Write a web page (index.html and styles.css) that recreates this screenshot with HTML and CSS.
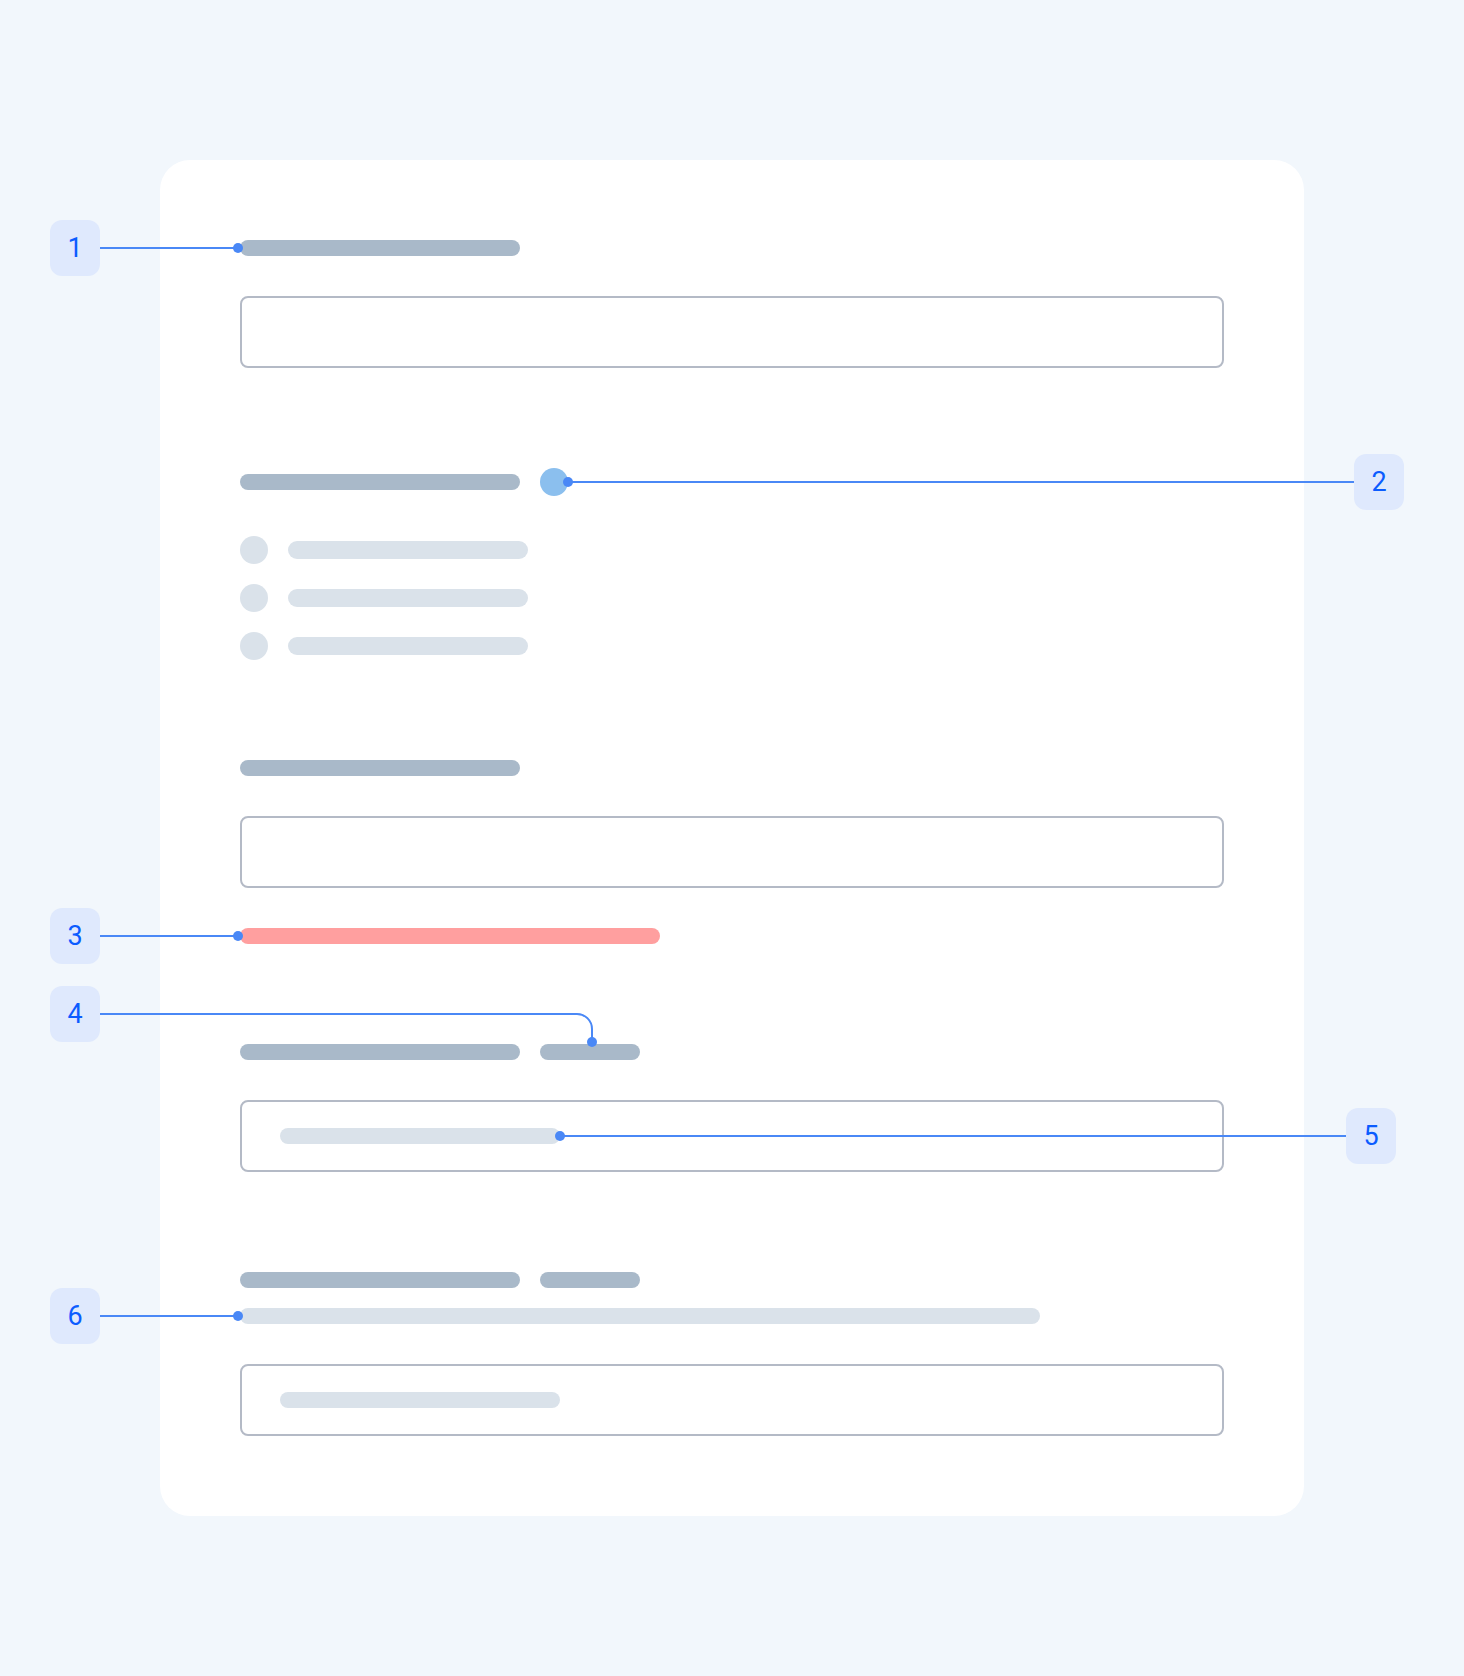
FILE: index.html
```html
<!DOCTYPE html>
<html lang="en">
<head>
  <meta charset="UTF-8">
  <meta name="viewport" content="width=device-width, initial-scale=1.0">
  <title>Form anatomy</title>
  <link rel="stylesheet" href="styles.css">
</head>
<body>

  <div class="page">
    <!-- Form skeleton -->
    <div class="card">

      <!-- Text field -->
      <div class="field">
        <div class="bar label"></div>
        <div class="input"></div>
      </div>

      <!-- Radio group with tooltip -->
      <div class="field">
        <div class="label-row">
          <div class="bar label"></div>
          <div class="tip"></div>
        </div>
        <div class="options">
          <div class="option"><span class="radio"></span><span class="bar option-text"></span></div>
          <div class="option"><span class="radio"></span><span class="bar option-text"></span></div>
          <div class="option"><span class="radio"></span><span class="bar option-text"></span></div>
        </div>
      </div>

      <!-- Field with error -->
      <div class="field">
        <div class="bar label"></div>
        <div class="input"></div>
        <div class="bar error"></div>
      </div>

      <!-- Optional field with placeholder -->
      <div class="field">
        <div class="label-row">
          <div class="bar label"></div>
          <div class="bar label-small"></div>
        </div>
        <div class="input"><span class="bar placeholder"></span></div>
      </div>

      <!-- Field with helper text -->
      <div class="field">
        <div class="label-row">
          <div class="bar label"></div>
          <div class="bar label-small"></div>
        </div>
        <div class="bar helper"></div>
        <div class="input"><span class="bar placeholder"></span></div>
      </div>

    </div>

    <!-- Callout lines -->
    <svg class="callouts" width="1464" height="1676" viewBox="0 0 1464 1676">
      <g fill="none" stroke="#4a88f6" stroke-width="2">
        <path d="M100 248 H238"/>
        <path d="M568 482 H1354"/>
        <path d="M100 936 H238"/>
        <path d="M100 1014 H577 A15 15 0 0 1 592 1029 V1042"/>
        <path d="M560 1136 H1346"/>
        <path d="M100 1316 H238"/>
      </g>
      <g fill="#4a88f6">
        <circle cx="238" cy="248" r="5"/>
        <circle cx="568" cy="482" r="5"/>
        <circle cx="238" cy="936" r="5"/>
        <circle cx="592" cy="1042" r="5"/>
        <circle cx="560" cy="1136" r="5"/>
        <circle cx="238" cy="1316" r="5"/>
      </g>
    </svg>

    <!-- Numbered markers -->
    <div class="marker" style="left: 50px; top: 220px;">1</div>
    <div class="marker" style="left: 1354px; top: 454px;">2</div>
    <div class="marker" style="left: 50px; top: 908px;">3</div>
    <div class="marker" style="left: 50px; top: 986px;">4</div>
    <div class="marker" style="left: 1346px; top: 1108px;">5</div>
    <div class="marker" style="left: 50px; top: 1288px;">6</div>
  </div>

</body>
</html>
```

FILE: styles.css
```css
* {
  margin: 0;
  padding: 0;
  box-sizing: border-box;
}

body {
  font-family: Roboto, 'Liberation Sans', sans-serif;
  background-color: #f2f7fc;
}

.page {
  position: relative;
  width: 1464px;
  height: 1676px;
  padding: 160px;
}

/* Card */
.card {
  display: flex;
  flex-direction: column;
  gap: 100px;
  background-color: #fff;
  border-radius: 30px;
  padding: 80px;
}

.field {
  display: flex;
  flex-direction: column;
  align-items: flex-start;
}

/* Skeleton bars */
.bar {
  display: block;
  height: 16px;
  border-radius: 8px;
}

.label {
  width: 280px;
  background-color: #a9b9c9;
}

.label-small {
  width: 100px;
  background-color: #a9b9c9;
}

.label-row {
  display: flex;
  align-items: center;
  gap: 20px;
}

.label-row + .input {
  margin-top: 40px;
}

.bar.label + .input {
  margin-top: 40px;
}

.tip {
  width: 28px;
  height: 28px;
  border-radius: 50%;
  background-color: #8bbfee;
}

/* Inputs */
.input {
  display: flex;
  align-items: center;
  width: 100%;
  height: 72px;
  padding: 0 38px;
  border: 2px solid #b4bac6;
  border-radius: 8px;
}

.placeholder {
  width: 280px;
  background-color: #dae2ea;
}

.error {
  width: 420px;
  margin-top: 40px;
  background-color: #ff9f9f;
}

.helper {
  width: 800px;
  margin-top: 20px;
  background-color: #dae2ea;
}

.helper + .input {
  margin-top: 40px;
}

/* Radio options */
.options {
  display: flex;
  flex-direction: column;
  gap: 20px;
  margin-top: 40px;
}

.option {
  display: flex;
  align-items: center;
  gap: 20px;
}

.radio {
  width: 28px;
  height: 28px;
  border-radius: 50%;
  background-color: #dae2ea;
}

.option-text {
  width: 240px;
  height: 18px;
  border-radius: 9px;
  background-color: #dae2ea;
}

/* Callouts */
.callouts {
  position: absolute;
  top: 0;
  left: 0;
  pointer-events: none;
}

.marker {
  position: absolute;
  width: 50px;
  height: 56px;
  display: flex;
  align-items: center;
  justify-content: center;
  border-radius: 12px;
  background-color: #dfe9fd;
  color: #0b5cff;
  font-size: 27px;
}
```
